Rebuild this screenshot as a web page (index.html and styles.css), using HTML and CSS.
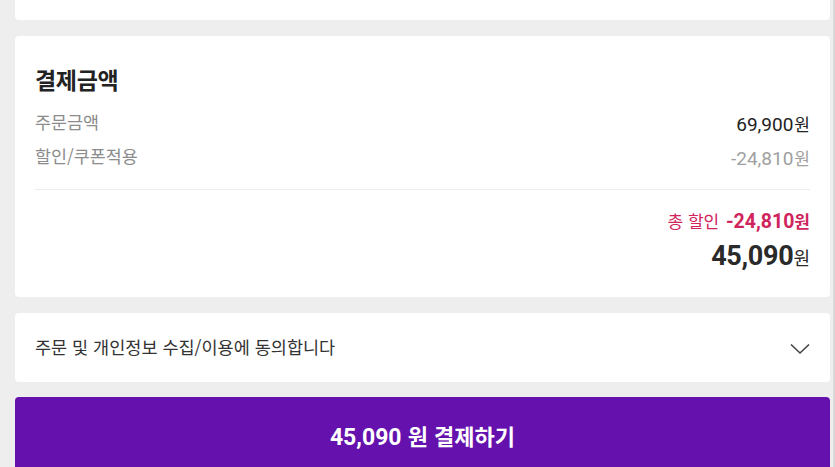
FILE: index.html
```html
<!DOCTYPE html>
<html lang="ko">
<head>
<meta charset="utf-8">
<link rel="stylesheet" href="styles.css">
</head>
<body>
<div class="page">
  <div class="card card-top"></div>
  <section class="card pay">
    <h2 class="title">결제금액</h2>
    <div class="row">
      <span class="label">주문금액</span>
      <span class="value"><span class="num">69,900</span>원</span>
    </div>
    <div class="row">
      <span class="label">할인/쿠폰적용</span>
      <span class="value muted"><span class="num">-24,810</span>원</span>
    </div>
    <div class="divider"></div>
    <div class="total-discount">총 할인 <b class="num">-24,810</b><b>원</b></div>
    <div class="total"><span class="num">45,090</span><span class="won">원</span></div>
  </section>
  <section class="card agree">
    <span class="agree-text">주문 및 개인정보 수집/이용에 동의합니다</span>
    <svg class="chev" width="20" height="12" viewBox="0 0 20 12"><path d="M1 1.5 L10 10 L19 1.5" fill="none" stroke="#444" stroke-width="1.6"/></svg>
  </section>
  <button class="pay-btn"><span class="num">45,090</span> 원 결제하기</button>
</div>
</body>
</html>
```
FILE: styles.css
```css
* { box-sizing: border-box; }
html, body { margin: 0; padding: 0; }
body {
  background: #eeeeee;
  font-family: "Noto Sans CJK KR", "Noto Sans", sans-serif;
  color: #222;
  height: 467px;
  overflow: hidden;
  border-right: 2px solid #d9d9d9;
}
.page {
  padding: 0 3px 0 15px;
  display: flex;
  flex-direction: column;
}
.num { font-family: Roboto, "Noto Sans CJK KR", sans-serif; }
.card {
  background: #fff;
  border-radius: 4px;
}
.card-top {
  height: 20px;
  border-radius: 0 0 4px 4px;
  margin-bottom: 16px;
}
.pay {
  height: 261px;
  padding: 27px 20px 0;
  display: flex;
  flex-direction: column;
  margin-bottom: 16px;
}
.title {
  margin: 0 0 24px;
  font-size: 23px;
  font-weight: 700;
  line-height: 32px;
  color: #222;
  letter-spacing: -0.3px;
}
.row {
  display: flex;
  justify-content: space-between;
  align-items: flex-start;
  height: 34px;
}
.label {
  font-size: 17.4px;
  color: #8c8c8c;
  line-height: 20px;
  margin-top: -7px;
}
.value {
  font-size: 17px;
  line-height: 20px;
  color: #222;
  margin-top: -5px;
}
.value .num { font-size: 19px; margin-right: 1px; }
.value.muted { color: #a0a0a0; }
.divider {
  height: 1px;
  background: #ececec;
  margin-top: 2px;
}
.total-discount {
  margin-top: 20px;
  text-align: right;
  color: #d0245c;
  font-size: 17px;
  line-height: 22px;
}
.total-discount b.num { font-size: 19.5px; font-weight: 700; margin-left: 2px; }
.total-discount b { font-weight: 700; }
.total {
  margin-top: 6px;
  text-align: right;
  line-height: 34px;
  color: #2a2a2a;
}
.total .num { font-size: 27px; font-weight: 700; letter-spacing: -0.3px; }
.total .won { font-size: 18px; }
.agree {
  height: 69px;
  padding: 0 20px;
  display: flex;
  align-items: center;
  justify-content: space-between;
  margin-bottom: 15px;
}
.agree-text {
  font-size: 17.5px;
  color: #333;
  margin-top: -3px;
}
.chev { display: block; margin-top: 2px; }
.pay-btn {
  height: 76px;
  border: 0;
  border-radius: 4px;
  background: #6411ad;
  color: #fff;
  font-family: "Noto Sans CJK KR", sans-serif;
  font-size: 22px;
  font-weight: 700;
  padding: 0;
  width: 100%;
}
.pay-btn .num { font-size: 23px; }
```
